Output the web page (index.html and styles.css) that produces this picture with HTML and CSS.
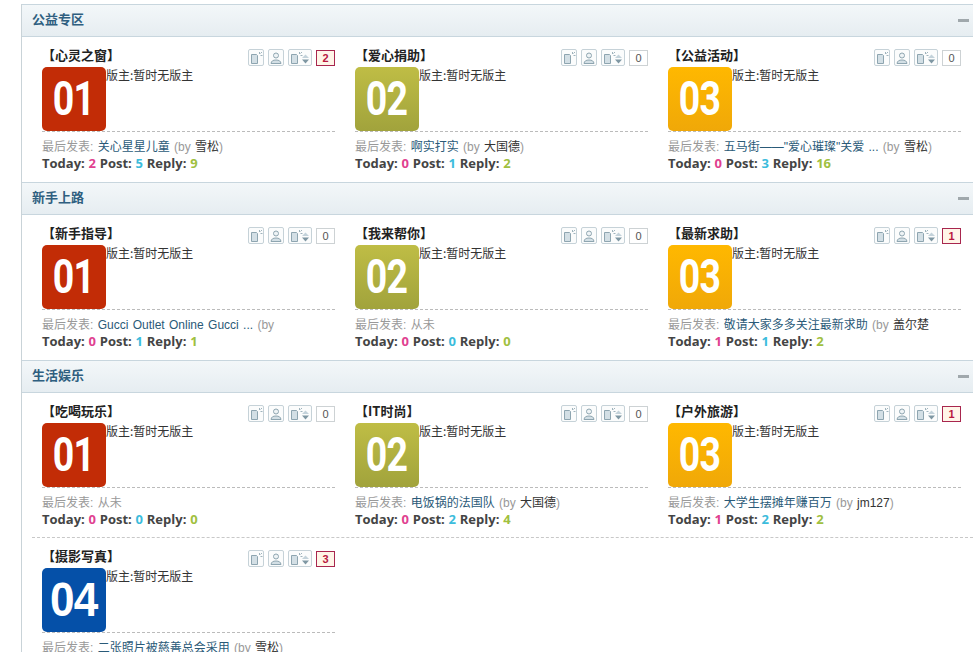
FILE: index.html
```html
<!DOCTYPE html>
<html lang="zh-CN">
<head>
<meta charset="utf-8">
<title>论坛</title>
<link rel="stylesheet" href="styles.css">
</head>
<body>
<svg class="defs" aria-hidden="true">
  <symbol id="i-new" viewBox="0 0 14 14"><path d="M2.500 3.500h5l1 1v8h-6z" fill="#d3dfe5" stroke="#8ea5b0"/><path d="M10.500 1v2M11.500 4.500h2M11.500 2.500l1.500-1.500" stroke="#9fb3bc" fill="none"/></symbol>
  <symbol id="i-user" viewBox="0 0 14 14"><circle cx="7" cy="4.500" r="2.500" fill="#eef3f5" stroke="#8ea5b0"/><path d="M2 12.500c.3-2.500 2-3.500 5-3.500s4.700 1 5 3.500z" fill="#d3dfe5" stroke="#8ea5b0"/></symbol>
  <symbol id="i-sort" viewBox="0 0 22 14"><path d="M2.500 3.500h5l1 1v8h-6z" fill="#d3dfe5" stroke="#8ea5b0"/><path d="M10.500 1v2M11.500 4.500h2M11.500 2.500l1.500-1.500" stroke="#9fb3bc" fill="none"/><path d="M13 7l3.500-3.500L20 7z" fill="#c3d2da"/><path d="M13 8.500h7L16.500 12.500z" fill="#7f97a3"/></symbol>
</svg>
<main class="forum">

<section class="group">
  <header class="group-head"><h2>公益专区</h2><span class="collapse"></span></header>
  <div class="boards">
    <article class="board">
      <div class="board-top"><h3>【心灵之窗】</h3><div class="tools"><span class="tool"><svg class="ic"><use href="#i-new"/></svg></span><span class="tool"><svg class="ic"><use href="#i-user"/></svg></span><span class="tool wide"><svg class="ic-w"><use href="#i-sort"/></svg></span><span class="count hot">2</span></div></div>
      <div class="board-mid"><div class="logo red"><span>01</span></div><p class="mods">版主:暂时无版主</p></div>
      <p class="last">最后发表: <a>关心星星儿童</a> (by <b>雪松</b>)</p>
      <p class="stats">Today: <i class="t">2</i> Post: <i class="p">5</i> Reply: <i class="r">9</i></p>
    </article>
    <article class="board">
      <div class="board-top"><h3>【爱心捐助】</h3><div class="tools"><span class="tool"><svg class="ic"><use href="#i-new"/></svg></span><span class="tool"><svg class="ic"><use href="#i-user"/></svg></span><span class="tool wide"><svg class="ic-w"><use href="#i-sort"/></svg></span><span class="count">0</span></div></div>
      <div class="board-mid"><div class="logo olive"><span>02</span></div><p class="mods">版主:暂时无版主</p></div>
      <p class="last">最后发表: <a>啊实打实</a> (by <b>大国德</b>)</p>
      <p class="stats">Today: <i class="t">0</i> Post: <i class="p">1</i> Reply: <i class="r">2</i></p>
    </article>
    <article class="board">
      <div class="board-top"><h3>【公益活动】</h3><div class="tools"><span class="tool"><svg class="ic"><use href="#i-new"/></svg></span><span class="tool"><svg class="ic"><use href="#i-user"/></svg></span><span class="tool wide"><svg class="ic-w"><use href="#i-sort"/></svg></span><span class="count">0</span></div></div>
      <div class="board-mid"><div class="logo amber"><span>03</span></div><p class="mods">版主:暂时无版主</p></div>
      <p class="last">最后发表: <a>五马街——"爱心璀璨"关爱 ...</a> (by <b>雪松</b>)</p>
      <p class="stats">Today: <i class="t">0</i> Post: <i class="p">3</i> Reply: <i class="r">16</i></p>
    </article>
  </div>
</section>

<section class="group">
  <header class="group-head"><h2>新手上路</h2><span class="collapse"></span></header>
  <div class="boards">
    <article class="board">
      <div class="board-top"><h3>【新手指导】</h3><div class="tools"><span class="tool"><svg class="ic"><use href="#i-new"/></svg></span><span class="tool"><svg class="ic"><use href="#i-user"/></svg></span><span class="tool wide"><svg class="ic-w"><use href="#i-sort"/></svg></span><span class="count">0</span></div></div>
      <div class="board-mid"><div class="logo red"><span>01</span></div><p class="mods">版主:暂时无版主</p></div>
      <p class="last">最后发表: <a>Gucci Outlet Online Gucci ...</a> (by</p>
      <p class="stats">Today: <i class="t">0</i> Post: <i class="p">1</i> Reply: <i class="r">1</i></p>
    </article>
    <article class="board">
      <div class="board-top"><h3>【我来帮你】</h3><div class="tools"><span class="tool"><svg class="ic"><use href="#i-new"/></svg></span><span class="tool"><svg class="ic"><use href="#i-user"/></svg></span><span class="tool wide"><svg class="ic-w"><use href="#i-sort"/></svg></span><span class="count">0</span></div></div>
      <div class="board-mid"><div class="logo olive"><span>02</span></div><p class="mods">版主:暂时无版主</p></div>
      <p class="last">最后发表: 从未</p>
      <p class="stats">Today: <i class="t">0</i> Post: <i class="p">0</i> Reply: <i class="r">0</i></p>
    </article>
    <article class="board">
      <div class="board-top"><h3>【最新求助】</h3><div class="tools"><span class="tool"><svg class="ic"><use href="#i-new"/></svg></span><span class="tool"><svg class="ic"><use href="#i-user"/></svg></span><span class="tool wide"><svg class="ic-w"><use href="#i-sort"/></svg></span><span class="count hot">1</span></div></div>
      <div class="board-mid"><div class="logo amber"><span>03</span></div><p class="mods">版主:暂时无版主</p></div>
      <p class="last">最后发表: <a>敬请大家多多关注最新求助</a> (by <b>盖尔楚</b></p>
      <p class="stats">Today: <i class="t">1</i> Post: <i class="p">1</i> Reply: <i class="r">2</i></p>
    </article>
  </div>
</section>

<section class="group">
  <header class="group-head"><h2>生活娱乐</h2><span class="collapse"></span></header>
  <div class="boards">
    <article class="board">
      <div class="board-top"><h3>【吃喝玩乐】</h3><div class="tools"><span class="tool"><svg class="ic"><use href="#i-new"/></svg></span><span class="tool"><svg class="ic"><use href="#i-user"/></svg></span><span class="tool wide"><svg class="ic-w"><use href="#i-sort"/></svg></span><span class="count">0</span></div></div>
      <div class="board-mid"><div class="logo red"><span>01</span></div><p class="mods">版主:暂时无版主</p></div>
      <p class="last">最后发表: 从未</p>
      <p class="stats">Today: <i class="t">0</i> Post: <i class="p">0</i> Reply: <i class="r">0</i></p>
    </article>
    <article class="board">
      <div class="board-top"><h3>【IT时尚】</h3><div class="tools"><span class="tool"><svg class="ic"><use href="#i-new"/></svg></span><span class="tool"><svg class="ic"><use href="#i-user"/></svg></span><span class="tool wide"><svg class="ic-w"><use href="#i-sort"/></svg></span><span class="count">0</span></div></div>
      <div class="board-mid"><div class="logo olive"><span>02</span></div><p class="mods">版主:暂时无版主</p></div>
      <p class="last">最后发表: <a>电饭锅的法国队</a> (by <b>大国德</b>)</p>
      <p class="stats">Today: <i class="t">0</i> Post: <i class="p">2</i> Reply: <i class="r">4</i></p>
    </article>
    <article class="board">
      <div class="board-top"><h3>【户外旅游】</h3><div class="tools"><span class="tool"><svg class="ic"><use href="#i-new"/></svg></span><span class="tool"><svg class="ic"><use href="#i-user"/></svg></span><span class="tool wide"><svg class="ic-w"><use href="#i-sort"/></svg></span><span class="count hot">1</span></div></div>
      <div class="board-mid"><div class="logo amber"><span>03</span></div><p class="mods">版主:暂时无版主</p></div>
      <p class="last">最后发表: <a>大学生摆摊年赚百万</a> (by <b>jm127</b>)</p>
      <p class="stats">Today: <i class="t">1</i> Post: <i class="p">2</i> Reply: <i class="r">2</i></p>
    </article>
  </div>
  <div class="boards next-row">
    <article class="board">
      <div class="board-top"><h3>【摄影写真】</h3><div class="tools"><span class="tool"><svg class="ic"><use href="#i-new"/></svg></span><span class="tool"><svg class="ic"><use href="#i-user"/></svg></span><span class="tool wide"><svg class="ic-w"><use href="#i-sort"/></svg></span><span class="count hot">3</span></div></div>
      <div class="board-mid"><div class="logo blue"><span class="plain">04</span></div><p class="mods">版主:暂时无版主</p></div>
      <p class="last">最后发表: <a>二张照片被慈善总会采用</a> (by <b>雪松</b>)</p>
    </article>
  </div>
</section>

</main>
</body>
</html>
```

FILE: styles.css
```css
html, body {
  margin: 0;
  height: 652px;
  overflow: hidden;
  background: #fff;
}
body {
  padding: 4px 0 0 21px;
  box-sizing: border-box;
  font: 12px/16px "Noto Sans CJK SC", "Liberation Sans", sans-serif;
  color: #333;
}
.defs { width: 0; height: 0; display: block; }
.forum { border-left: 1px solid #c9d3d8; }
.group-head {
  height: 28px;
  display: flex;
  align-items: center;
  justify-content: space-between;
  padding: 0 4px 3px 10px;
  border-top: 1px solid #c8d6de;
  border-bottom: 1px solid #c8d6de;
  background: linear-gradient(#f3f7f9, #e6edf1);
}
.group-head h2 {
  margin: 0;
  font-size: 13px;
  font-weight: 700;
  color: #2f5f80;
}
.collapse { width: 11px; height: 3px; margin-top: 3px; background: #a0a8ac; }
.boards {
  display: grid;
  grid-template-columns: repeat(3, 293px);
  column-gap: 20px;
  padding: 10px 0 11px 20px;
}
.next-row {
  margin: -1px 0 0 10px;
  padding-left: 10px;
  border-top: 1px dashed #c8c8c8;
}
.board p { margin: 0; }
.board-top {
  height: 20px;
  display: flex;
  align-items: flex-start;
  justify-content: space-between;
}
.board-top h3 {
  margin: 0;
  font-size: 13px;
  line-height: 16px;
  font-weight: 700;
  color: #222;
}
.tools { display: flex; align-items: center; gap: 4px; margin-top: 2px; }
.tool {
  width: 14px;
  height: 15px;
  display: flex;
  align-items: center;
  justify-content: center;
  border: 1px solid #c6d2d8;
  border-radius: 2px;
  background: #fbfcfc;
}
.tool.wide { width: 22px; }
.ic { width: 14px; height: 14px; }
.ic-w { width: 22px; height: 14px; }
.count {
  width: 17px;
  height: 14px;
  border: 1px solid #cdd2d4;
  font: 11px/14px "Liberation Sans", sans-serif;
  text-align: center;
  color: #555;
}
.count.hot {
  border-color: #a8264e;
  background: #fff5e8;
  color: #b8183f;
  font-weight: 700;
}
.board-mid {
  display: flex;
  align-items: flex-start;
  height: 64px;
  border-bottom: 1px dashed #bbb;
}
.logo {
  width: 64px;
  height: 64px;
  flex: none;
  border-radius: 5px;
  display: flex;
  align-items: center;
  justify-content: center;
  overflow: hidden;
  color: #fff;
  font: 700 48px/64px Roboto, "Liberation Sans", sans-serif;
}
.logo span { display: block; transform: scaleX(.78); letter-spacing: -1px; }
.logo .plain { transform: scaleX(.92); font-family: "Liberation Sans", sans-serif; }
.red { background: #c22c06; }
.olive { background: linear-gradient(#bfbd45, #a1a33c); }
.amber { background: linear-gradient(#ffb800, #f0a808); }
.blue { background: #0550a8; }
.mods { font-size: 12px; line-height: 16px; color: #333; }
.last {
  margin-top: 7px !important;
  height: 16px;
  overflow: hidden;
  white-space: nowrap;
  color: #999;
  word-spacing: 1px;
  font-family: "Liberation Sans", "Noto Sans CJK SC", sans-serif;
}
.last a { color: #2a5a78; }
.last b { font-weight: 400; color: #333; }
.stats {
  font: 700 13px/16px "Open Sans", sans-serif;
  color: #444;
  white-space: nowrap;
  word-spacing: .4px;
}
.stats i { font-style: normal; }
.t { color: #e0408f; }
.p { color: #3cbcdc; }
.r { color: #a0c040; }
```
